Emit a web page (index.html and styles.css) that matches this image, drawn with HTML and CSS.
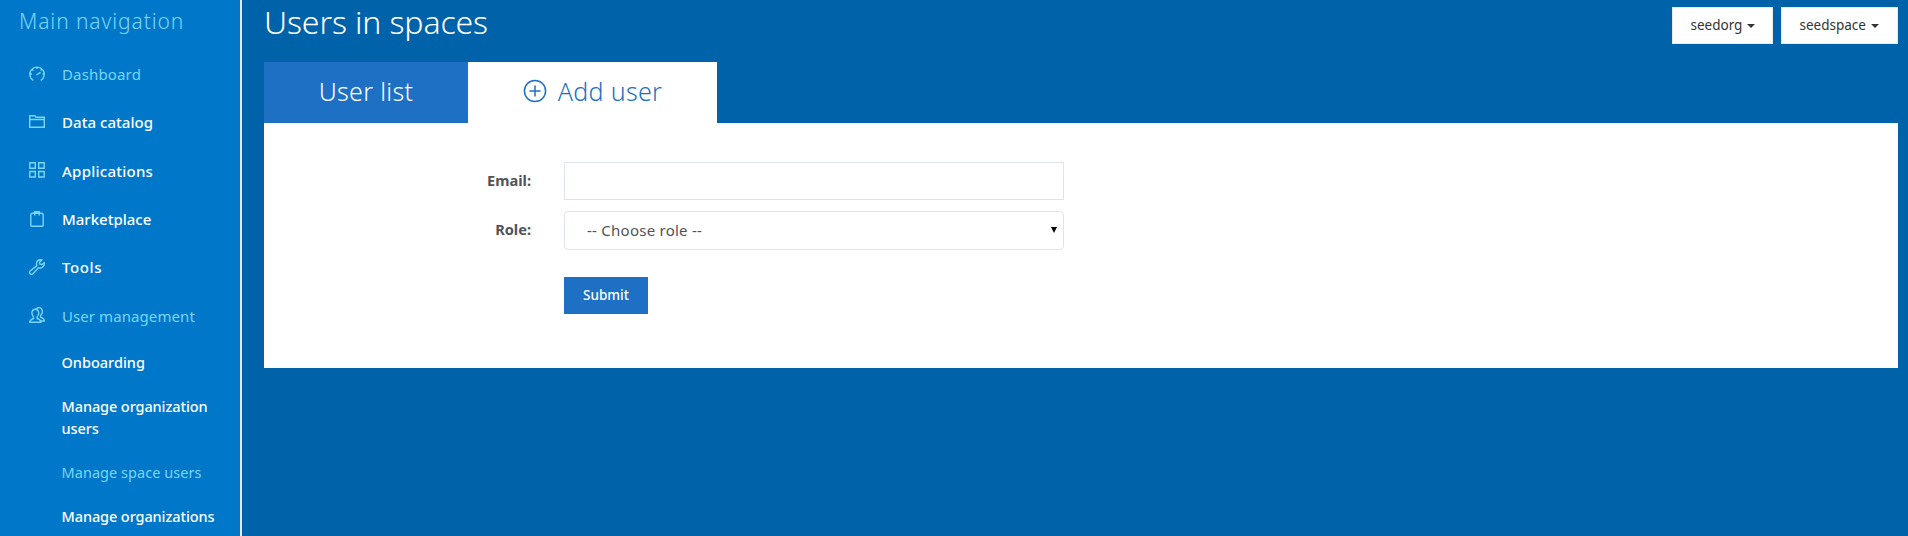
FILE: index.html
```html
<!DOCTYPE html>
<html lang="en">
<head>
<meta charset="utf-8">
<title>Users in spaces</title>
<link rel="stylesheet" href="styles.css">
</head>
<body>
<div class="app">
  <nav class="sidebar">
    <h2 class="nav-title">Main navigation</h2>
    <ul class="nav-list">
      <li class="nav-item current">
        <svg class="icon" viewBox="0 0 16 16"><path d="M4.3 14.5A7.2 7.2 0 1 1 11.7 14.5M7.4 9 11.6 6.4M8 1v2M1 8h2M13.5 8H15M3.2 3.2l1.2 1.2M12.8 3.2l-1.2 1.2"/></svg>
        <a class="t-dash">Dashboard</a>
      </li>
      <li class="nav-item">
        <svg class="icon" viewBox="0 0 16 16"><path d="M.7 13.3V1.7H5.8L7 3.3H15.3V13.3ZM.7 5.5H15.3"/></svg>
        <a class="t-data">Data catalog</a>
      </li>
      <li class="nav-item">
        <svg class="icon" viewBox="0 0 16 16"><path d="M.8 .8H6.3V6.3H.8ZM9.7 .8H15.2V6.3H9.7ZM.8 9.5H6.3V15H.8ZM9.7 9.5H15.2V15H9.7Z"/></svg>
        <a class="t-apps">Applications</a>
      </li>
      <li class="nav-item">
        <svg class="icon" viewBox="0 0 16 16"><path d="M3 2.3H13L14.2 3.3V14.3Q14.2 15.3 13.2 15.3H2.8Q1.8 15.3 1.8 14.3V3.3ZM5.8 4.5V.8H10.2V4.5"/></svg>
        <a class="t-market">Marketplace</a>
      </li>
      <li class="nav-item">
        <svg class="icon" viewBox="0 0 16 16"><path d="M12.8.9C9.8 0 7 2.2 7.6 5.4L7.8 6.6 1.2 12A1.9 1.9 0 0 0 4 14.8L9.4 8.7C12.6 9.7 15.8 7.3 15.2 3.8L13 5.5 10.8 5.2 10.6 3.2Z"/></svg>
        <a class="t-tools">Tools</a>
      </li>
      <li class="nav-item current">
        <svg class="icon" viewBox="0 0 16 16"><path d="M.8 15.3C.8 12.6 2.7 12.4 4.5 11.5V9.9C1.7 6.8 2.8 2.2 6.3 2.2S10.9 6.8 8.2 9.9V11.5C10 12.4 11.9 12.6 11.9 15.3ZM7.3 2.1C8.2.7 9.3.6 10 .6 13.5.6 14.5 5.6 11.6 8.6V10.2C13.4 11.1 15.3 11.3 15.3 14H12"/></svg>
        <a class="t-um">User management</a>
      </li>
    </ul>
    <ul class="sub-list">
      <li class="sub-item t-onb">Onboarding</li>
      <li class="sub-item t-morg">Manage organization users</li>
      <li class="sub-item current t-msp">Manage space users</li>
      <li class="sub-item t-morg">Manage organizations</li>
    </ul>
  </nav>
  <main class="content">
    <header class="page-head">
      <h1 class="page-title">Users in spaces</h1>
      <div class="selectors">
        <button class="dropdown org"><span>seedorg</span><i class="caret"></i></button>
        <button class="dropdown space"><span>seedspace</span><i class="caret"></i></button>
      </div>
    </header>
    <div class="tabs">
      <a class="tab tab-list">User list</a>
      <a class="tab tab-add active">
        <svg class="plus" viewBox="0 0 24 24"><circle cx="12" cy="12" r="10.6"/><path d="M12 6.5v11M6.5 12h11"/></svg>
        <span>Add user</span>
      </a>
    </div>
    <form class="panel">
      <label class="label label-email">Email:</label>
      <input class="input" type="text">
      <label class="label label-role">Role:</label>
      <div class="select"><span>-- Choose role --</span><i class="arrow"></i></div>
      <button class="submit" type="button">Submit</button>
    </form>
  </main>
</div>
</body>
</html>
```
FILE: styles.css
```css
* { box-sizing: border-box; }
body {
  margin: 0;
  background: #0062a9;
  font-family: "Noto Sans", "Open Sans", sans-serif;
  font-size: 15px;
}
.app { display: flex; height: 536px; overflow: hidden; }
.sidebar {
  flex: none;
  width: 242px;
  background: #0077c8;
  border-right: 2px solid #e4e9ec;
  color: #fff;
}
.nav-title {
  margin: 6px 0 19px 19px;
  font-size: 21px;
  line-height: 31px;
  font-weight: 300;
  letter-spacing: 0.9px;
  color: #7bd6f8;
}
.nav-list, .sub-list { list-style: none; margin: 0; padding: 0; }
.nav-item {
  display: flex;
  align-items: center;
  height: 48.3px;
  margin: 0 0 0 29px;
  gap: 17px;
  padding-bottom: 12px;
  font-weight: 500;
}
.icon {
  width: 16px;
  height: 16px;
  margin-top: -1px;
  fill: none;
  stroke: #7bd6f8;
  stroke-width: 1.4;
}
.t-dash { letter-spacing: 0.15px; }
.t-data { letter-spacing: 0.05px; }
.t-apps { letter-spacing: 0.25px; }
.t-tools { letter-spacing: 0.6px; }
.t-um { letter-spacing: 0.08px; }
.current { color: #7bd6f8; font-weight: 400; }
.sub-list { padding: 5px 10px 0 61.5px; font-weight: 500; font-size: 14.5px; }
.sub-item { line-height: 22px; margin-bottom: 22px; }
.t-morg { letter-spacing: -0.1px; }
.t-onb { letter-spacing: 0; }
.t-msp { letter-spacing: 0.05px; }
.content { flex: 1; padding: 0 10px 0 22px; }
.page-head { display: flex; justify-content: space-between; height: 62px; }
.page-title {
  margin: 0;
  font-size: 32px;
  line-height: 43px;
  font-weight: 300;
  letter-spacing: -0.12px;
  color: #fff;
}
.selectors { display: flex; gap: 8px; padding-top: 7px; }
.dropdown {
  display: flex;
  align-items: center;
  height: 37px;
  padding: 0 0 1px 17.5px;
  border: 1px solid #e4ecee;
  background: #fff;
  color: #333;
  font: 400 13.5px "Noto Sans", sans-serif;
}
.org { width: 101px; }
.space { width: 117px; }
.caret {
  margin: 2px 0 0 5px;
  border: 4px solid transparent;
  border-top-color: #333;
  border-bottom: 0;
}
.tabs { display: flex; height: 61px; }
.tab {
  display: flex;
  align-items: center;
  justify-content: center;
  font-size: 25px;
  font-weight: 300;
  letter-spacing: 0.3px;
  color: #fff;
  background: #1d70c4;
  padding-bottom: 3px;
}
.tab-list { width: 204px; }
.tab-add { width: 249px; gap: 11px; }
.active { background: #fff; color: #1d70c4; }
.plus { width: 24px; height: 24px; fill: none; stroke: #1d70c4; stroke-width: 1.5; }
.panel {
  display: grid;
  grid-template-columns: 267px 500px;
  grid-template-rows: 38px 39px 37px;
  column-gap: 33px;
  row-gap: 11px;
  height: 245px;
  padding-top: 39px;
  background: #fff;
  color: #505359;
}
.label { font-size: 14.6px; font-weight: 700; text-align: right; line-height: 36px; }
.label-role { line-height: 37px; }
.input { border: 1px solid #dce5e7; background: #fff; padding: 0 22px; }
.select {
  display: flex;
  align-items: center;
  justify-content: space-between;
  border: 1px solid #dce5e7;
  border-radius: 4px;
  padding: 0 6px 1px 22px;
  letter-spacing: 0.25px;
}
.arrow { border: 3px solid transparent; border-top: 6px solid #000; border-bottom: 0; }
.submit {
  grid-column: 2;
  width: 84px;
  height: 37px;
  margin-top: 16px;
  border: 0;
  padding: 0 0 2px;
  background: #1d70c4;
  color: #fff;
  font: 500 13.5px "Noto Sans", sans-serif;
}
```
